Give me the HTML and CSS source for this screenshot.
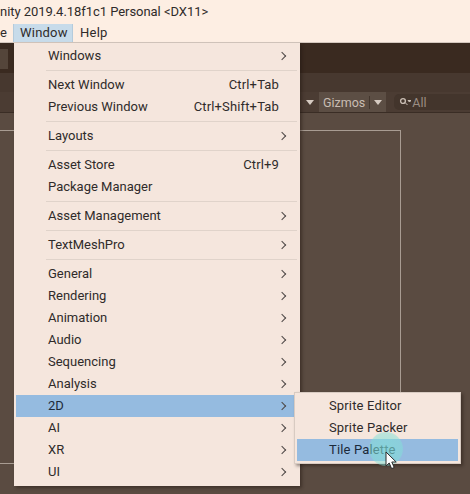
FILE: index.html
```html
<!DOCTYPE html>
<html lang="en">
<head>
  <meta charset="UTF-8" />
  <title>Unity</title>
  <link rel="stylesheet" href="styles.css">
</head>
<body>
  <div class="titlebar">nity 2019.4.18f1c1 Personal &lt;DX11&gt;</div>

  <div class="menubar">
    <span class="top-item cut">e</span>
    <span class="top-item active">Window</span>
    <span class="top-item">Help</span>
  </div>

  <div class="editor">
    <div class="tabs"><div class="tab-box"></div></div>
    <div class="subtabs"></div>
    <div class="toolbar">
      <span class="caret"></span>
      <span class="gizmos">Gizmos<i class="sep"></i><span class="caret"></span></span>
      <span class="search">
        <svg width="12" height="10" viewBox="0 0 12 10"><circle cx="4" cy="4" r="2.4" fill="none" stroke="#c9bdb3" stroke-width="1.4"/><path d="M6 5.5l2.5 2.5M9 3.5h3l-1.5 1.5z" stroke="#c9bdb3" fill="#c9bdb3" stroke-width="1"/></svg>
        All
      </span>
    </div>
    <div class="scene"><div class="frame"></div></div>
  </div>

  <!-- Window menu -->
  <div class="menu main-menu">
    <div class="row">Windows<span class="arrow"></span></div>
    <div class="line"></div>
    <div class="row">Next Window<span class="keys">Ctrl+Tab</span></div>
    <div class="row">Previous Window<span class="keys">Ctrl+Shift+Tab</span></div>
    <div class="line"></div>
    <div class="row">Layouts<span class="arrow"></span></div>
    <div class="line"></div>
    <div class="row">Asset Store<span class="keys">Ctrl+9</span></div>
    <div class="row">Package Manager</div>
    <div class="line"></div>
    <div class="row">Asset Management<span class="arrow"></span></div>
    <div class="line"></div>
    <div class="row">TextMeshPro<span class="arrow"></span></div>
    <div class="line"></div>
    <div class="row">General<span class="arrow"></span></div>
    <div class="row">Rendering<span class="arrow"></span></div>
    <div class="row">Animation<span class="arrow"></span></div>
    <div class="row">Audio<span class="arrow"></span></div>
    <div class="row">Sequencing<span class="arrow"></span></div>
    <div class="row">Analysis<span class="arrow"></span></div>
    <div class="row selected">2D<span class="arrow"></span></div>
    <div class="row">AI<span class="arrow"></span></div>
    <div class="row">XR<span class="arrow"></span></div>
    <div class="row">UI<span class="arrow"></span></div>
  </div>

  <!-- 2D submenu -->
  <div class="menu sub-menu">
    <div class="row">Sprite Editor</div>
    <div class="row">Sprite Packer</div>
    <div class="row selected">Tile Palette</div>
  </div>

  <div class="click-glow"></div>
  <svg class="cursor" width="14" height="20" viewBox="0 0 14 20">
    <path d="M1 1v14l3.2-3 2.4 5.6 2.6-1.1-2.4-5.5h4.4z" fill="#fff" stroke="#2a2a2a" stroke-width="1"/>
  </svg>
</body>
</html>
```

FILE: styles.css
```css
html, body {
  margin: 0;
  padding: 0;
}

body {
  width: 470px;
  height: 494px;
  position: relative;
  overflow: hidden;
  background-color: #5a4b41;
  font-family: Roboto, "Noto Sans", sans-serif;
  font-size: 13px;
  color: #2f2b2a;
}

.titlebar {
  height: 24px;
  line-height: 24px;
  background-color: #fdeee3;
  white-space: pre;
  letter-spacing: -0.05px;
}

.menubar {
  height: 18px;
  display: flex;
  background-color: #fdeee3;
  border-bottom: 1px solid #d4c7be;
  letter-spacing: 0.2px;
}

.top-item {
  line-height: 18px;
  padding: 0 7px;
}

.top-item.cut {
  padding: 0 6px 0 0;
}

.top-item.active {
  box-sizing: border-box;
  width: 60px;
  padding: 0 6px;
  background-color: #c7dbea;
  border: 1px solid #b4cbdc;
  border-width: 0 1px;
}

.editor {
  height: 451px;
  display: flex;
  flex-direction: column;
}

.tabs {
  height: 24px;
  padding-top: 6px;
  background-color: #3a2a20;
}

.tab-box {
  width: 8px;
  height: 20px;
  background-color: #54453a;
}

.subtabs {
  height: 19px;
  background-color: #47382f;
}

.toolbar {
  height: 20px;
  background-color: #4b3c33;
  border-bottom: 1px solid #3a2d25;
  display: flex;
  align-items: center;
  padding-left: 306px;
  color: #c9bdb3;
  font-size: 12.5px;
}

.caret {
  width: 0;
  height: 0;
  border-left: 4px solid transparent;
  border-right: 4px solid transparent;
  border-top: 5px solid #d6cbc2;
}

.gizmos {
  height: 20px;
  margin-left: 5px;
  padding: 0 4px;
  background-color: #5c4e44;
  display: flex;
  align-items: center;
}

.sep {
  width: 1px;
  height: 13px;
  margin: 0 4px;
  background-color: #43362d;
}

.search {
  flex: 1;
  height: 16px;
  margin-left: 8px;
  padding-left: 5px;
  background-color: #43352c;
  border-radius: 5px 0 0 5px;
  display: flex;
  align-items: center;
  gap: 1px;
  color: #9a8d83;
}

.scene {
  height: 334px;
  padding: 17px 69px 0 0;
}

.frame {
  box-sizing: border-box;
  height: 100%;
  border: 1px solid #a89c92;
  border-left: 0;
}

.menu {
  position: absolute;
  box-sizing: border-box;
  background-color: #f5e6dd;
  box-shadow: 2px 2px 3px rgba(30, 20, 15, 0.45);
}

.main-menu {
  left: 14px;
  top: 43px;
  width: 286px;
  height: 443px;
  padding: 2px;
}

.sub-menu {
  left: 294px;
  top: 392px;
  width: 167px;
  height: 72px;
  padding: 2px;
  border: 1px solid #d8cbc2;
  letter-spacing: 0.15px;
}

.row {
  height: 22px;
  line-height: 22px;
  padding-left: 32px;
  display: flex;
  position: relative;
}

.row.selected {
  background-color: #95bbe0;
  color: #1c2a3a;
}

.keys {
  position: absolute;
  right: 19px;
  top: 0;
  letter-spacing: 0.15px;
}

.arrow {
  position: absolute;
  right: 13px;
  top: 8px;
  width: 5px;
  height: 5px;
  border-top: 1px solid #4d4745;
  border-right: 1px solid #4d4745;
  transform: rotate(45deg);
}

.line {
  height: 1px;
  margin: 3px 1px 3px 30px;
  background-color: #e0d3ca;
}

.click-glow {
  position: absolute;
  left: 369px;
  top: 432px;
  width: 34px;
  height: 34px;
  border-radius: 50%;
  background: radial-gradient(circle, rgba(130, 225, 215, 0.65) 0%, rgba(130, 225, 215, 0.5) 65%, rgba(130, 225, 215, 0) 100%);
}

.cursor {
  position: absolute;
  left: 385px;
  top: 451px;
}
```
